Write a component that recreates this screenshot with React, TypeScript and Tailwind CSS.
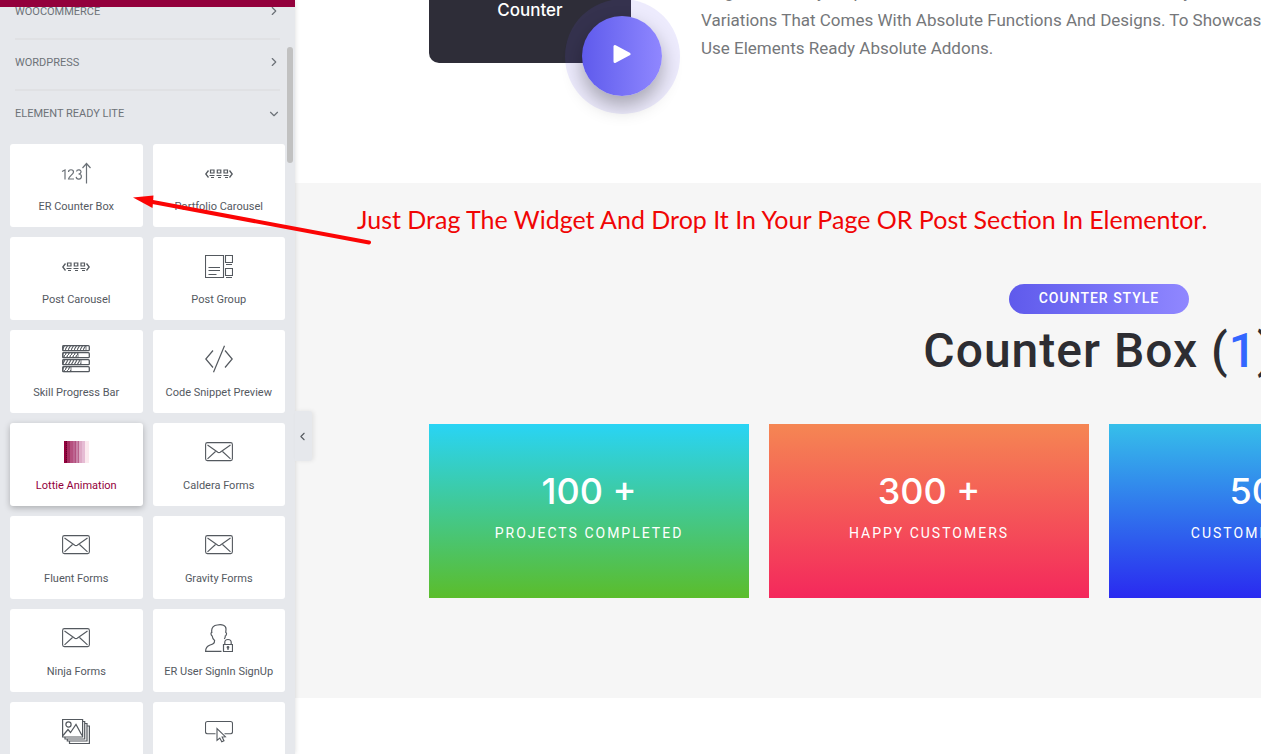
import { ChevronDown, ChevronLeft, ChevronRight } from 'lucide-react';
import type { ReactNode } from 'react';

function CounterIcon() {
    return (
        <svg width="30" height="28" viewBox="0 0 30 28" fill="none" stroke="#6b7177" strokeWidth="1.2">
            <path d="M1 12.5L4 11v9.500" />
            <path d="M7.500 13c0-3 5-3 5 0 0 2.300-5 4.500-5 7H13" />
            <path d="M15.500 12.500c.5-2.500 5-2 4.500.6-.2 1.300-1.300 1.900-2.500 1.900 1.500 0 2.900.8 2.900 2.500 0 3.300-5 3.400-5.200.4" />
            <path d="M25.500 24.500V5M21.500 9l4-4.500 4 4.500" />
        </svg>
    );
}

function CarouselIcon() {
    return (
        <svg width="28" height="28" viewBox="0 0 28 28" fill="none" stroke="#54595f">
            <path d="M3.500 11.500L.8 15l2.700 3.500M24.500 11.500l2.700 3.500-2.700 3.500" strokeWidth="1.300" />
            <path
                d="M5.500 11h3.500v3H5.500zM12.300 11h3.500v3h-3.500zM19 11h3.500v3H19z"
                strokeWidth="1.200"
            />
            <path d="M4.500 16.500h5M11.500 16.500h5M18.500 16.500h5M6 18.500h3M13 18.500h3M20 18.500h3" />
        </svg>
    );
}

function PostGroupIcon() {
    return (
        <svg width="28" height="28" viewBox="0 0 28 28" fill="none" stroke="#54595f" strokeWidth="1.100">
            <path d="M.5 3.500h18v22H.5zM20.500 3.500h7v7h-7zM20.500 16.500h7v7h-7z" />
            <path d="M3.500 15.500h11.500M3.500 18.500h11.500M3.500 22.500h8M21 12.500h6M21 25.500h6" />
        </svg>
    );
}

const skillRows = [
    { y: 0.7, fill: 24 },
    { y: 7.7, fill: 16 },
    { y: 14.7, fill: 19 },
    { y: 21.7, fill: 9 },
];

function SkillIcon() {
    return (
        <svg width="28" height="28" viewBox="0 0 28 28" fill="none" stroke="#54595f">
            <defs>
                <pattern id="hatch" width="3" height="5" patternUnits="userSpaceOnUse">
                    <path d="M0 5L3 0" strokeWidth="1.100" stroke="#54595f" />
                </pattern>
            </defs>
            {skillRows.map((row) => (
                <g key={row.y}>
                    <rect x=".7" y={row.y} width="26.600" height="5" rx="1" strokeWidth="1.300" />
                    <rect x="1" y={row.y} width={row.fill - 1} height="5" fill="url(#hatch)" strokeWidth=".8" />
                </g>
            ))}
        </svg>
    );
}

function CodeIcon() {
    return (
        <svg width="28" height="28" viewBox="0 0 28 28" fill="none" stroke="#54595f" strokeWidth="1.200">
            <path d="M8 5.500L.8 14 8 22.500M20 5.500l7.200 8.500-7.200 8.500M19.500.8l-11 26.400" />
        </svg>
    );
}

function LottieIcon() {
    return (
        <svg width="26" height="22" viewBox="0 0 26 22">
            <path fill="#93003c" d="M1 0h3v22H1z" />
            <path fill="#a52f62" d="M4 0h3v22H4z" />
            <path fill="#b5507e" d="M7 0h3v22H7z" />
            <path fill="#bd6591" d="M10 0h3v22h-3z" />
            <path fill="#c984a8" d="M13 0h3v22h-3z" />
            <path fill="#dda9c5" d="M16 0h3v22h-3z" />
            <path fill="#e6bcd4" d="M19 0h3v22h-3z" />
            <path fill="#fbe9ee" d="M22 0h4v22h-4z" />
            <path stroke="#5e0629" strokeDasharray="1 1" d="M3.500 0v22" />
            <path stroke="#a52f62" strokeWidth=".4" d="M6.500 0v22M12.500 0v22M15.500 0v22" />
        </svg>
    );
}

function MailIcon() {
    return (
        <svg width="28" height="28" viewBox="0 0 28 28" fill="none" stroke="#54595f" strokeWidth="1.100">
            <rect x=".6" y="4.600" width="26.800" height="18" rx="1.800" />
            <path d="M2.500 7l10.300 7.300q1.200.7 2.400 0L25.500 7M2.500 20.800l8-7.300M25.500 20.800l-8-7.300" />
        </svg>
    );
}

function UserLockIcon() {
    return (
        <svg width="28" height="28" viewBox="0 0 28 28" fill="none" stroke="#54595f" strokeWidth="1.200">
            <path d="M16.500 27.400H.6c0-4 1.500-5.400 4.500-6.400 3-.9 4.500-1.500 4.500-4.500-1.500-1-2.200-2.800-2.400-4.500-1.200-.3-1.700-3.500-.4-3.600C6 3.500 9 .9 12.500 1c4.500-1 8.500.5 8.500 4 0 1.500-.3 2.500-.2 3.500 1.200.2.700 3.200-.5 3.500 0 1.200-.4 2.200-1 3" />
            <path d="M18.500 20.500h9v7h-9zM19.800 20.500v-2c0-4 6.400-4 6.400 0v2M23 23v3" />
            <circle cx="23" cy="23.300" r=".8" />
        </svg>
    );
}

function GalleryIcon() {
    return (
        <svg width="28" height="28" viewBox="0 0 28 28" fill="none" stroke="#54595f" strokeWidth="1.200">
            <path d="M.6 2.500h20V20H.6zM20.500 4.500h2.200V22H3v-2M22.500 6.500H25V24H5.300v-2M25 9h2.400v17.500H7.500V24" />
            <circle cx="6.500" cy="7.500" r="2.600" />
            <path d="M1 18.500l5-6 2.500 3L14 7.500l6 11" />
        </svg>
    );
}

function ButtonIcon() {
    return (
        <svg width="28" height="28" viewBox="0 0 28 28" fill="none" stroke="#54595f" strokeWidth="1.100">
            <path d="M10.500 16.800H2.500c-1.200 0-2-.8-2-2V6.500c0-1.200.8-2 2-2h23c1.200 0 2 .8 2 2v8.300c0 1.200-.8 2-2 2h-6" />
            <path d="M12 11.500v11.800l2.800-2.300 2 3.800 2.200-1-1.900-3.800 3.300-.3z" />
        </svg>
    );
}

interface Widget {
    name: string;
    icon: ReactNode;
    active?: boolean;
}

const widgets: Widget[] = [
    { name: 'ER Counter Box', icon: <CounterIcon /> },
    { name: 'Portfolio Carousel', icon: <CarouselIcon /> },
    { name: 'Post Carousel', icon: <CarouselIcon /> },
    { name: 'Post Group', icon: <PostGroupIcon /> },
    { name: 'Skill Progress Bar', icon: <SkillIcon /> },
    { name: 'Code Snippet Preview', icon: <CodeIcon /> },
    { name: 'Lottie Animation', icon: <LottieIcon />, active: true },
    { name: 'Caldera Forms', icon: <MailIcon /> },
    { name: 'Fluent Forms', icon: <MailIcon /> },
    { name: 'Gravity Forms', icon: <MailIcon /> },
    { name: 'Ninja Forms', icon: <MailIcon /> },
    { name: 'ER User SignIn SignUp', icon: <UserLockIcon /> },
    { name: 'Image Gallery', icon: <GalleryIcon /> },
    { name: 'Button', icon: <ButtonIcon /> },
];

const counters = [
    { value: '100 +', label: 'Projects Completed', color: 'from-[#29d4f5] to-[#5bbd2b]' },
    { value: '300 +', label: 'Happy Customers', color: 'from-[#f58653] to-[#f4285c]' },
    { value: '50 +', label: 'Customer Review', color: 'from-[#36bfea] to-[#2a2af0]' },
];

function CategoryHeader({ title, open }: { title: string; open?: boolean }) {
    return (
        <button className="flex h-[51px] w-full items-center justify-between px-1 pl-[5px] text-[11px] text-[#6d7278] uppercase">
            {title}
            {open ? <ChevronDown size={14} className="mb-[2px]" /> : <ChevronRight size={14} className="mb-[3px]" />}
        </button>
    );
}

function WidgetCard({ widget }: { widget: Widget }) {
    return (
        <button
            className={`flex h-[83px] flex-col items-center rounded-[3px] bg-white pt-[15px] text-[11px] ${
                widget.active ? 'text-[#93003c] shadow-[0_2px_6px_rgba(0,0,0,0.25)]' : 'text-[#54595f]'
            }`}
        >
            <span className="flex h-7 items-center">{widget.icon}</span>
            <span className="mt-3 leading-4 whitespace-nowrap">{widget.name}</span>
        </button>
    );
}

function Sidebar() {
    return (
        <aside className="relative z-10 w-[295px] shrink-0 bg-[#e6e8ec] shadow-[0_0_5px_rgba(0,0,0,0.15)]">
            <div className="relative z-10 h-[7px] bg-[#93003c]" />
            <div className="-mt-5 px-[10px]">
                <CategoryHeader title="WooCommerce" />
                <hr className="mx-[5px] -mb-[2px] border-t-2 border-[#e0e1e4]" />
                <CategoryHeader title="WordPress" />
                <hr className="mx-[5px] -mb-[2px] border-t-2 border-[#e0e1e4]" />
                <CategoryHeader title="Element Ready Lite" open />
                <div className="mt-1 grid grid-cols-2 gap-[10px]">
                    {widgets.map((widget) => (
                        <WidgetCard key={widget.name} widget={widget} />
                    ))}
                </div>
            </div>
            {/* scroll thumb */}
            <div className="absolute top-[47px] right-[2px] h-[116px] w-[6px] rounded-full bg-[#c1c1c1]" />
            <button
                aria-label="Collapse panel"
                className="absolute top-[411px] left-full flex h-[50px] w-[17px] items-center justify-center rounded-r-[3px] bg-[#e6e8ec] pr-[3px] text-[#54595f] shadow-[2px_0_4px_rgba(0,0,0,0.08)]"
            >
                <ChevronLeft size={13} />
            </button>
        </aside>
    );
}

function Intro() {
    return (
        <section className="flex h-[183px] w-[1340px] items-start">
            <div className="relative h-[63px] w-[202px] shrink-0 rounded-b-[10px] bg-[#2e2d38] text-center font-['Inter',sans-serif] text-[17px] leading-5 font-medium text-white">
                Counter
                <div className="absolute top-[-1px] left-[136px] size-[115px] rounded-full bg-[#6a5eee]/12 p-[17px]">
                    <button
                        aria-label="Play video"
                        className="flex size-20 items-center justify-center rounded-full bg-linear-to-r from-[#5f5aec] to-[#9087ff] pb-1 shadow-[0_10px_20px_rgba(0,0,0,0.3)]"
                    >
                        <svg width="18" height="20" viewBox="0 0 18 20">
                            <path
                                d="M2 2.500v15l14-7.500z"
                                fill="#fff"
                                stroke="#fff"
                                strokeWidth="3"
                                strokeLinejoin="round"
                            />
                        </svg>
                    </button>
                </div>
            </div>
            <p className="-mt-[22px] ml-[70px] text-[17px] leading-7 whitespace-nowrap text-[#75777a]">
                Single Discovery Map Of Useful Counter Box Addons With Variety Of
                <br />
                Variations That Comes With Absolute Functions And Designs. To Showcase Them
                <br />
                Use Elements Ready Absolute Addons.
            </p>
        </section>
    );
}

function CounterSection() {
    return (
        <section className="h-[515px] bg-[#f6f6f6]">
            <p className="pt-5 pl-[62px] font-['Lato',sans-serif] text-[25px] leading-8 whitespace-nowrap text-[#f00505]">
                Just Drag The Widget And Drop It In Your Page OR Post Section In Elementor.
            </p>
            <div className="ml-[134px] flex w-[1340px] flex-col items-center pt-[49px]">
                <span className="h-[30px] rounded-full bg-linear-to-r from-[#5f5aec] to-[#9087ff] px-[30px] text-[14px] leading-7 font-medium tracking-[1px] text-white uppercase">
                    Counter Style
                </span>
                <h2 className="mt-2 text-[48px] leading-[58px] font-medium tracking-[1px] text-[#2d2d32]">
                    Counter Box (<span className="text-[#3366ff]">1</span>)
                </h2>
                <div className="mt-[44px] grid w-full grid-cols-4 gap-5">
                    {counters.map((counter) => (
                        <div
                            key={counter.value}
                            className={`h-[174px] bg-linear-to-b/srgb pt-[46px] text-center text-white ${counter.color}`}
                        >
                            <div className="font-['Inter',sans-serif] text-[36px] leading-[42px] font-medium">
                                {counter.value}
                            </div>
                            <div className="mt-[11px] text-[14px] leading-5 tracking-[2px] uppercase">
                                {counter.label}
                            </div>
                        </div>
                    ))}
                </div>
            </div>
        </section>
    );
}

export default function App() {
    return (
        <div className="relative flex h-screen overflow-hidden bg-white font-['Roboto',sans-serif]">
            <Sidebar />
            <main className="min-w-0 flex-1 overflow-hidden">
                <div className="pl-[134px]">
                    <Intro />
                </div>
                <CounterSection />
            </main>
            {/* hint arrow pointing at the widget card */}
            <svg
                className="pointer-events-none absolute top-[190px] left-[130px] z-20"
                width="245"
                height="60"
                viewBox="0 0 245 60"
            >
                <path d="M20 11.500L239 52.500" stroke="#fb0505" strokeWidth="4" strokeLinecap="round" />
                <path d="M3 7.500L23.500 5.500 22.500 18z" fill="#fb0505" />
            </svg>
        </div>
    );
}
